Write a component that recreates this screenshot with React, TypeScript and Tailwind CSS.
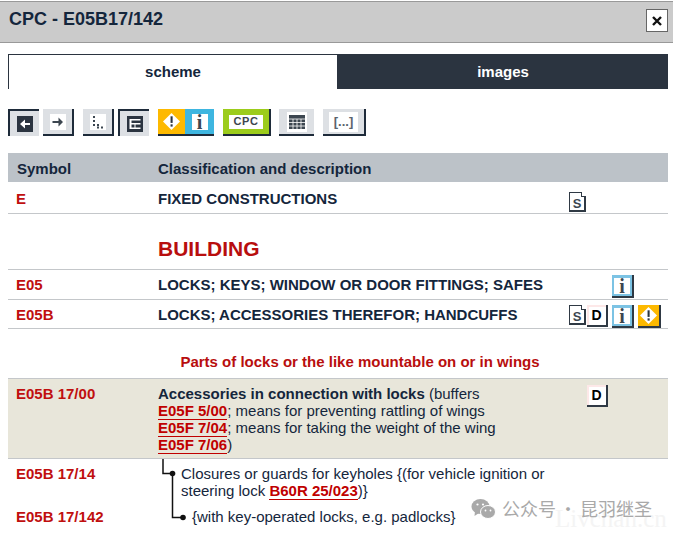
import type { ReactNode } from 'react';

const font = { fontFamily: '"Liberation Sans", Arial, sans-serif' };

const ToolBtn = ({ active, className, children }: { active?: boolean; className: string; children: ReactNode }) => (
  <div className={`flex h-[27px] items-center justify-center ${active ? 'border-t-2 border-l-2 border-[#1e2b3a]' : 'border-r-2 border-b-2 border-[#1e2b3a]'} ${className}`}>
    {children}
  </div>
);

const Diamond = ({ size = 17 }: { size?: number }) => (
  <svg width={size} height={size} viewBox="0 0 18 18">
    <path d="M9 0 18 9 9 18 0 9Z" fill="#fff" />
    <rect x="8" y="3.5" width="2.2" height="7" fill="#2a3440" />
    <rect x="8" y="12" width="2.2" height="2.4" fill="#2a3440" />
  </svg>
);

const InfoGlyph = () => (
  <span className="flex h-[16px] w-[16px] items-center justify-center bg-white font-['Liberation_Serif'] text-[20px] leading-none font-bold text-[#3c4650]">i</span>
);

const SmallIcon = ({ kind }: { kind: 'S' | 'D' | 'i' | 'w' }) => {
  if (kind === 'S') {
    return (
      <div className="relative flex h-[20px] w-[17px] items-center justify-center border-t border-r-2 border-b-2 border-l border-[#2f3944] bg-white pt-[3px] text-[13px] leading-none font-bold text-[#3c4650]">
        S
        <span className="absolute -top-px -right-0.5 h-[5px] w-[5px] border-b border-l border-[#2f3944] bg-white" />
      </div>
    );
  }
  if (kind === 'D') {
    return (
      <div className="flex h-[22px] w-[21px] items-center justify-center border-r-2 border-b-2 border-[#2f3944] bg-white shadow-[inset_2px_2px_0_#fde8e8] text-[14px] leading-none font-black text-black">
        D
      </div>
    );
  }
  if (kind === 'i') {
    return (
      <div className="flex h-[23px] w-[22px] items-center justify-center border-r-2 border-b-2 border-[#2f3944] bg-[#7cc3e4]">
        <InfoGlyph />
      </div>
    );
  }
  return (
    <div className="flex h-[23px] w-[23px] items-center justify-center border-r-2 border-b-2 border-[#2f3944] bg-[#fdb900]">
      <Diamond size={17} />
    </div>
  );
};

const Row = ({ symbol, children, icons, className }: { symbol: string; children: ReactNode; icons?: ReactNode; className: string }) => (
  <div className={`flex border-b border-[#c4c7ca] leading-[17px] ${className}`}>
    <div className="w-[150px] shrink-0 pl-2 text-[15px] font-bold text-[#c00f0f]">{symbol}</div>
    <div className="w-[411px] shrink-0 text-[15px] text-[#14263c]">{children}</div>
    <div>{icons}</div>
  </div>
);

const RefLink = ({ children }: { children: ReactNode }) => (
  <span className="border-b border-[#c00000] font-bold text-[#c00000]">{children}</span>
);

export default function App() {
  return (
    <div style={font} className="relative h-[535px] w-[673px] overflow-hidden bg-white">
      <header className="mt-px flex h-[42px] items-center justify-between border-y border-[#999] bg-[#cbcbcb] pr-[5px] pl-[9px]">
        <h1 className="-mt-[6px] text-[18px] font-bold text-[#14263c]">CPC - E05B17/142</h1>
        <button className="-mt-[3px] flex h-[23px] w-[22px] items-center justify-center border border-[#666] bg-white">
          <svg width="10" height="10" viewBox="0 0 10 10">
            <path d="M1 1 9 9M9 1 1 9" stroke="#111" strokeWidth="2.4" />
          </svg>
        </button>
      </header>

      <div className="mx-2 mt-[11px] flex h-[35px] w-[660px]">
        <div className="flex w-[330px] items-center justify-center border-x border-t border-[#2b3440] text-[15px] font-bold text-[#14263c]">scheme</div>
        <div className="flex w-[330px] items-center justify-center bg-[#2b3440] pt-px text-[15px] font-bold text-white">images</div>
      </div>

      <div className="mt-5 ml-2 flex items-start">
        <ToolBtn active className="w-[31px] bg-[#dde0e4]">
          <svg width="16" height="16" viewBox="0 0 16 16">
            <rect width="16" height="16" fill="#2b3440" />
            <path d="M3 8 8 3.500V7H13V9H8V12.500Z" fill="#fff" />
          </svg>
        </ToolBtn>
        <ToolBtn className="ml-1 w-[31px] bg-[#dde0e4]">
          <svg width="16" height="16" viewBox="0 0 16 16">
            <rect width="16" height="16" fill="#fff" />
            <path d="M13 8 8.500 3.500V7H2.500V9H8.500V12.500Z" fill="#3c4650" />
          </svg>
        </ToolBtn>
        <ToolBtn className="ml-[9px] w-[31px] bg-[#dde0e4]">
          <svg width="16" height="16" viewBox="0 0 16 16">
            <rect width="16" height="16" fill="#fff" />
            <path d="M3 2h2v2H3zM3 6h2v2H3zM3 10h2v2H3zM7 10h2v2H7zM7 12.500h2v2H7zM11 12.500h2v2h-2z" fill="#3c4650" />
          </svg>
        </ToolBtn>
        <ToolBtn active className="ml-1 w-[31px] bg-[#dde0e4]">
          <svg width="16" height="16" viewBox="0 0 16 16">
            <rect width="16" height="16" fill="#2b3440" />
            <path d="M2.500 3h11v1.500h-9V7h9v1.500h-9v3h9V13h-11Z" fill="#fff" />
            <path d="M8 7v5" stroke="#fff" strokeWidth="1" />
          </svg>
        </ToolBtn>
        <div className="ml-[9px] flex h-[27px] w-[56px] border-b-2 border-[#1e2b3a]">
          <div className="flex w-[27px] items-center justify-center bg-[#fdb900]">
            <Diamond />
          </div>
          <div className="flex w-[29px] items-center justify-center bg-[#3eb6e0]">
            <InfoGlyph />
          </div>
        </div>
        <ToolBtn className="ml-[9px] w-[48px] bg-[#9ccc1c]">
          <span className="flex h-[14px] w-[34px] items-center justify-center bg-white text-[11px] font-bold tracking-[0.6px] text-[#3c4650]">CPC</span>
        </ToolBtn>
        <div className="ml-2 flex h-[27px] w-[35px] items-center justify-center border-b-2 border-[#1e2b3a] bg-[#dde0e4]">
          <svg width="20" height="20" viewBox="0 0 20 20">
            <rect width="20" height="20" fill="#fff" />
            <rect x="2" y="3" width="16" height="14" fill="#3c4650" />
            <path d="M2 7h16M2 10.500h16M2 14h16M6 7v10M10 7v10M14 7v10" stroke="#fff" strokeWidth="0.8" />
          </svg>
        </div>
        <ToolBtn className="ml-[9px] w-[43px] bg-[#dde0e4]">
          <span className="flex h-[20px] w-[29px] items-center justify-center bg-white text-[13px] font-bold text-[#5a636d]">[...]</span>
        </ToolBtn>
      </div>

      <div className="mx-2 mt-[17px] w-[660px]">
        <div className="flex h-[29px] items-center bg-[#bcc2c8] pt-[4px] text-[15px] font-bold text-[#14263c]">
          <div className="w-[150px] pl-[9px]">Symbol</div>
          <div>Classification and description</div>
        </div>

        <Row symbol="E" className="h-[32px] pt-[8px]" icons={<div className="mt-[2px]"><SmallIcon kind="S" /></div>}>
          <span className="font-bold">FIXED CONSTRUCTIONS</span>
        </Row>

        <div className="flex h-[56px] items-center border-b border-[#c4c7ca] pt-[14px] pl-[150px] text-[21px] font-bold text-[#b80e0e]">BUILDING</div>

        <Row symbol="E05" className="h-[30px] pt-[6px]" icons={<div className="-mt-px pl-[43px]"><SmallIcon kind="i" /></div>}>
          <span className="font-bold">LOCKS; KEYS; WINDOW OR DOOR FITTINGS; SAFES</span>
        </Row>

        <Row
          symbol="E05B"
          className="h-[29px] pt-[6px]"
          icons={
            <div className="-mt-[1px] flex items-start">
              <SmallIcon kind="S" />
              <div className="mr-1 ml-px"><SmallIcon kind="D" /></div>
              <div className="mr-1"><SmallIcon kind="i" /></div>
              <SmallIcon kind="w" />
            </div>
          }
        >
          <span className="font-bold">LOCKS; ACCESSORIES THEREFOR; HANDCUFFS</span>
        </Row>

        <div className="flex h-[50px] items-end justify-center border-b border-[#c4c7ca] pb-[8px] pl-[44px] text-[15px] leading-[17px] font-bold text-[#b80e0e]">
          Parts of locks or the like mountable on or in wings
        </div>

        <Row
          symbol="E05B 17/00"
          className="h-[80px] bg-[#e8e6da] pt-[6px]"
          icons={<div className="pl-[18px]"><SmallIcon kind="D" /></div>}
        >
          <div className="w-[350px] leading-[17px]">
            <b>Accessories in connection with locks</b> (buffers
            <br />
            <RefLink>E05F 5/00</RefLink>; means for preventing rattling of wings
            <br />
            <RefLink>E05F 7/04</RefLink>; means for taking the weight of the wing
            <br />
            <RefLink>E05F 7/06</RefLink>)
          </div>
        </Row>

        <div className="relative flex pt-[6px] leading-[17px]">
          <div className="w-[150px] pl-2 text-[15px] font-bold text-[#c00f0f]">E05B 17/14</div>
          <div className="w-[400px] pl-[23px] text-[15px] text-[#14263c]">
            Closures or guards for keyholes {'{'}(for vehicle ignition or steering lock <RefLink>B60R 25/023</RefLink>){'}'}
          </div>
          <svg className="absolute top-0 left-[150px]" width="30" height="64" viewBox="0 0 30 64">
            <path d="M5 0V14.500H14.500M14.500 14.500V58.500H25" fill="none" stroke="#111" strokeWidth="1.500" />
            <circle cx="14.500" cy="14.500" r="2.800" fill="#111" />
            <circle cx="25" cy="58.500" r="2.800" fill="#111" />
          </svg>
        </div>
        <div className="mt-[9px] flex leading-[17px]">
          <div className="w-[150px] pl-2 text-[15px] font-bold text-[#c00f0f]">E05B 17/142</div>
          <div className="pl-[34px] text-[15px] text-[#14263c]">{'{with key-operated locks, e.g. padlocks}'}</div>
        </div>
      </div>

      <div className="absolute top-[505px] left-[555px] font-['Liberation_Serif'] text-[25px] leading-[28px] text-[#f4f4f4]">Livchan.cn</div>
      <div className="absolute top-[495px] left-[471px] flex items-center gap-[3px] font-['Noto_Sans_CJK_SC'] text-[18px] text-[#a9a9a9]">
        <svg className="mr-[3px]" width="25" height="22" viewBox="0 0 25 22">
          <ellipse cx="9.500" cy="8.500" rx="9" ry="7.500" fill="#a9a9a9" />
          <path d="M4 13 3.500 18 8 15Z" fill="#a9a9a9" />
          <ellipse cx="17" cy="14" rx="7.500" ry="6.500" fill="#a9a9a9" stroke="#fff" strokeWidth="1" />
          <circle cx="6.500" cy="6.500" r="1.100" fill="#fff" />
          <circle cx="12" cy="6.500" r="1.100" fill="#fff" />
          <circle cx="14.500" cy="12.500" r="0.900" fill="#fff" />
          <circle cx="19.500" cy="12.500" r="0.900" fill="#fff" />
        </svg>
        <span>公众号</span>
        <span className="w-[18px] text-center">·</span>
        <span>昆羽继圣</span>
      </div>
    </div>
  );
}
